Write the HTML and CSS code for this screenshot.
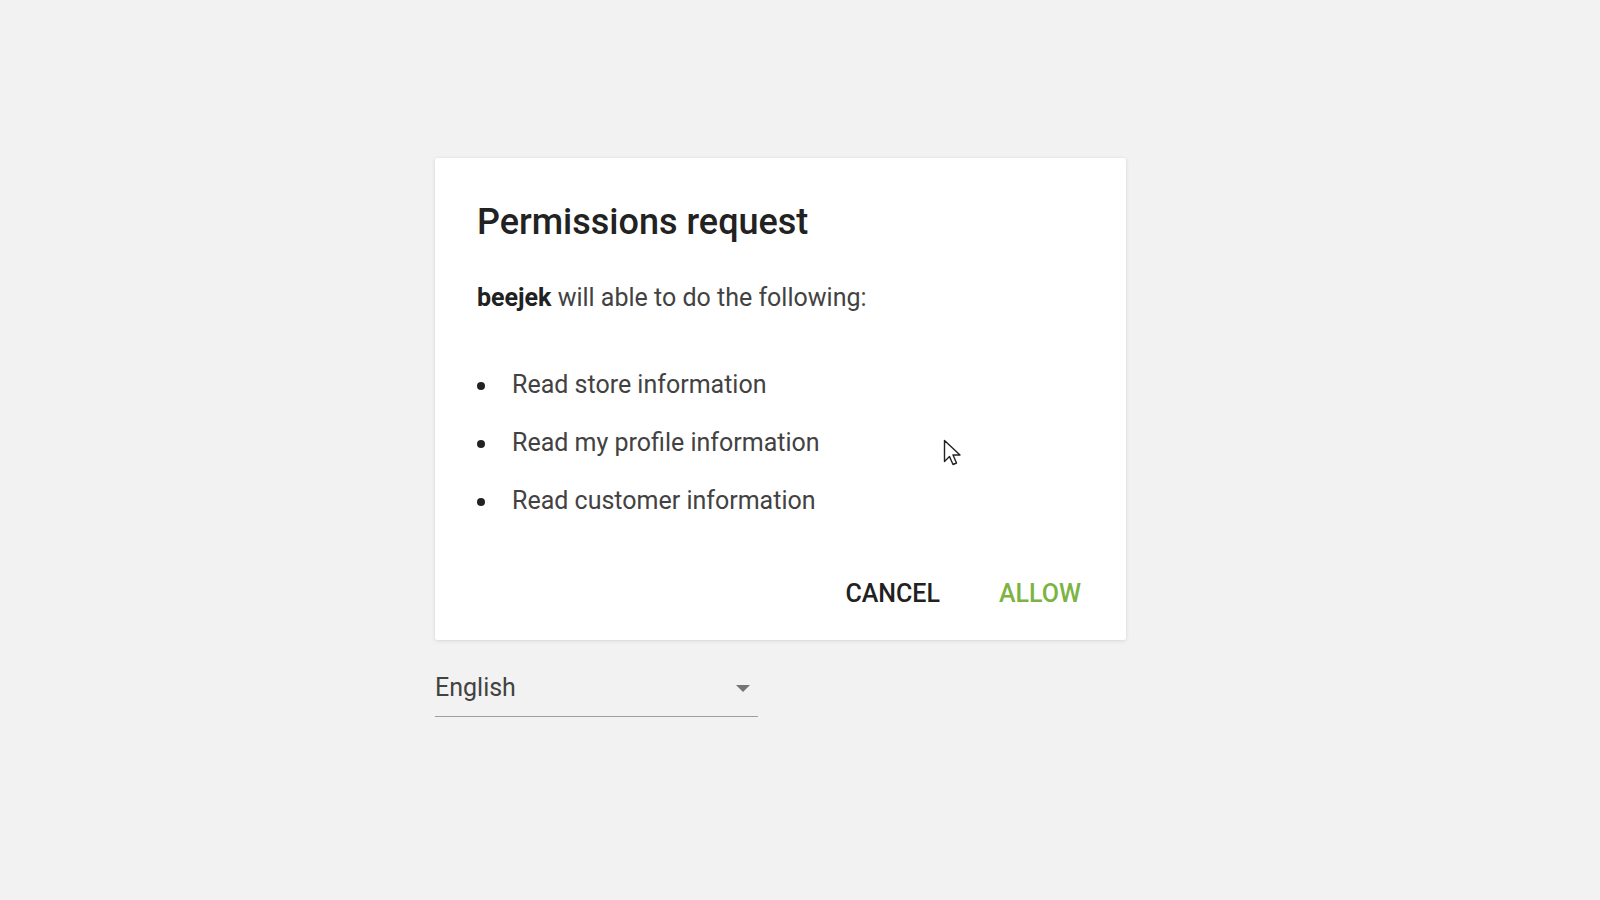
FILE: index.html
```html
<!DOCTYPE html>
<html>
<head>
<meta charset="utf-8">
<link rel="stylesheet" href="styles.css">
</head>
<body>
<div class="page">
  <div class="card">
    <h1 class="title">Permissions request</h1>
    <p class="lead"><b>beejek</b> will able to do the following:</p>
    <ul class="perms">
      <li>Read store information</li>
      <li>Read my profile information</li>
      <li>Read customer information</li>
    </ul>
    <div class="actions">
      <button class="btn cancel">CANCEL</button>
      <button class="btn allow">ALLOW</button>
    </div>
  </div>
  <div class="select">
    <span class="select-value">English</span>
    <svg class="select-arrow" width="14" height="7" viewBox="0 0 14 7"><path d="M0 0h14L7 7z" fill="#757575"/></svg>
  </div>
</div>
<svg class="cursor" width="20" height="30" viewBox="0 0 20 30"><path d="M1.5 1.5v21l5-5 3.5 8 3.5-1.5-3.5-8h7z" fill="#fff" stroke="#222" stroke-width="1.4" stroke-linejoin="round"/></svg>
</body>
</html>
```
FILE: styles.css
```css
html, body { margin: 0; padding: 0; }
body {
  background: #f2f2f2;
  font-family: Roboto, "Noto Sans", sans-serif;
  width: 1600px;
  height: 900px;
  overflow: hidden;
  position: relative;
}
.page {
  padding: 158px 0 0 435px;
  width: 691px;
}
.card {
  background: #fff;
  box-shadow: 0 1px 4px rgba(0,0,0,0.10), 0 0 2px rgba(0,0,0,0.06);
  padding: 42px 37px 28px 42px;
  border-radius: 2px;
}
.title {
  margin: 0;
  font-size: 36px;
  line-height: 44px;
  font-weight: 500;
  color: #222;
}
.lead {
  margin: 38px 0 0;
  font-size: 25px;
  line-height: 32px;
  color: #424242;
}
.lead b { font-weight: 700; color: #212121; }
.perms {
  margin: 55px 0 0;
  padding: 0;
  list-style: none;
}
.perms li {
  position: relative;
  padding-left: 35px;
  font-size: 25px;
  line-height: 32px;
  color: #424242;
  margin-bottom: 26px;
}
.perms li:last-child { margin-bottom: 0; }
.perms li::before {
  content: "";
  position: absolute;
  left: 0;
  top: 13px;
  width: 8px;
  height: 8px;
  border-radius: 50%;
  background: #222;
}
.actions {
  margin-top: 59px;
  display: flex;
  justify-content: flex-end;
  gap: 43px;
}
.btn {
  border: 0;
  background: none;
  font-family: Roboto, sans-serif;
  font-size: 25px;
  font-weight: 500;
  line-height: 36px;
  padding: 0 8px;
  cursor: pointer;
}
.cancel { color: #212121; }
.allow { color: #7cb342; }
.select {
  margin-top: 32px;
  width: 323px;
  padding-bottom: 12px;
  border-bottom: 1px solid #9e9e9e;
  display: flex;
  align-items: center;
  justify-content: space-between;
}
.select-value {
  font-size: 25px;
  line-height: 32px;
  color: #424242;
}
.select-arrow { margin-right: 8px; }
.cursor {
  position: absolute;
  left: 943px;
  top: 439px;
}
```
